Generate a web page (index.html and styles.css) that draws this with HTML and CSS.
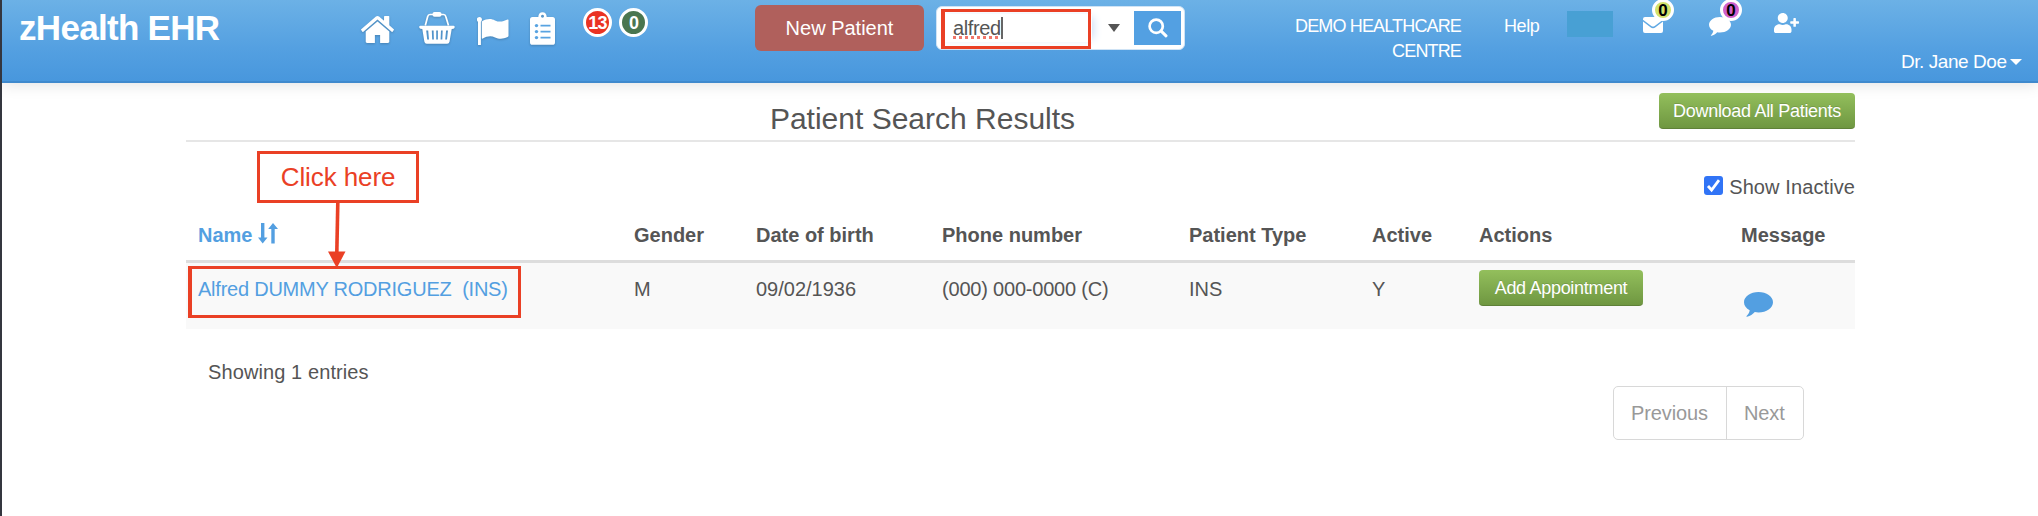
FILE: index.html
```
<!DOCTYPE html>
<html lang="en">
<head>
    <meta charset="UTF-8">
    <meta name="viewport" content="width=device-width, initial-scale=1.0">
    <title>zHealth EHR - Patient Search Results</title>
    <link rel="stylesheet" href="styles.css">
</head>
<body>

<svg width="0" height="0" class="sprite">
    <symbol id="comment" viewBox="0 0 29 25">
        <path d="M14.5 0C22.5 0 29 4.5 29 10.2S22.5 20.4 14.5 20.4c-1.3 0-2.5-.1-3.7-.3-2 2.200-4.600 3.900-7.700 4.700-.6.100-.9-.5-.5-.9 1.500-1.600 2.800-3 3.100-5.700C2.200 16.400 0 13.500 0 10.200 0 4.500 6.500 0 14.500 0z"/>
    </symbol>
</svg>

<header class="navbar">
    <a class="brand">zHealth EHR</a>
    <nav class="nav-icons">
        <svg class="icon-home" viewBox="89 253 1614 1283" preserveAspectRatio="none"><path d="M1472 992v480q0 26-19 45t-45 19h-384v-384h-256v384h-384q-26 0-45-19t-19-45v-480q0-1 .5-3t.5-3l575-474 575 474q1 2 1 6zm223-69l-62 74q-8 9-21 11h-3q-13 0-21-7l-692-577-692 577q-12 8-24 7-13-2-21-11l-62-74q-8-10-7-23.5t11-21.500l719-599q32-26 76-26t76 26l244 204v-195q0-14 9-23t23-9h192q14 0 23 9t9 23v408l219 182q10 8 11 21.500t-7 23.500z"/></svg>
        <svg class="icon-basket" viewBox="0 0 36 32">
            <path d="M6.300 13.500 8.700 4.500Q9.200 2.500 11 2.500h13.500q1.800 0 2.300 2l2.700 9" fill="none" stroke="#fff" stroke-width="1.700"/>
            <rect x="13.500" y="0" width="9" height="4.800" rx="2"/>
            <path fill-rule="evenodd" d="M1.500 13.700h33q1.200 0 1.200 1.400 0 1.300-1.200 1.600l-1.800.4-2.200 12.600q-.4 2.100-2.300 2.100H7.700q-1.900 0-2.300-2.100L3.300 17.100l-1.800-.4Q.2 16.400.2 15.100q0-1.400 1.300-1.400zM7.200 18.500l1 9h1.800l-.8-9zM12.800 18.500l.4 9h1.700l-.3-9zM17.200 18.500v9h1.700v-9zM22 18.500l-.4 9h1.700l.4-9zM27.100 18.500l-.9 9H28l1-9z"/>
        </svg>
        <svg class="icon-flag" viewBox="0 0 32 28">
            <circle cx="2.400" cy="2.500" r="2.500"/>
            <path d="M1 3h2.900v25H1zM4.800 4.500C10 1.200 14.500 1.500 18 3.400c4 2 8 1.400 12.500-.8q1-.5 1 .6v15.600q0 .8-.9 1.200c-5 2.400-9 1.900-12.500.4-4.300-1.800-8-1.200-12.300 1.200q-1 .5-1-.6z"/>
        </svg>
        <svg class="icon-list" viewBox="0 0 25 33">
            <path fill-rule="evenodd" d="M2.500 5H8.300Q8.500.3 12.500.3T16.700 5h5.800Q25 5 25 7.500v22.700q0 2.600-2.500 2.600h-20Q0 32.800 0 30.200V7.500Q0 5 2.500 5zM12.500 2.800a1.500 1.500 0 1 0 .01 0z"/>
            <g fill="#58a3e1"><path d="M10.500 12.700h10v1.800h-10zM10.500 18.700h10v1.800h-10zM10.500 24.700h10v1.800h-10z"/><circle cx="6.500" cy="13.600" r="1.700"/><circle cx="6.500" cy="19.600" r="1.700"/><circle cx="6.500" cy="25.600" r="1.700"/></g>
        </svg>
        <span class="count count-red">13</span>
        <span class="count count-green">0</span>
    </nav>
    <button class="btn-new">New Patient</button>
    <div class="search">
        <div class="search-input"><span class="typed">alfred</span></div>
        <span class="caret caret-dark"></span>
        <button class="search-btn">
            <svg width="20" height="20" viewBox="0 0 20 20"><circle cx="8.200" cy="8.200" r="6.600" fill="none" stroke="#fff" stroke-width="2.700"/><path d="m13.200 13.200 4.800 4.600" stroke="#fff" stroke-width="3" stroke-linecap="round"/></svg>
        </button>
    </div>
    <div class="clinic">DEMO HEALTHCARE CENTRE</div>
    <a class="help">Help</a>
    <span class="swatch"></span>
    <div class="alerts">
        <a class="alert alert-mail">
            <svg width="20" height="16" viewBox="0 0 20 16"><path d="M2 0h16q2 0 2 2v.8L11.700 9q-1.700 1.200-3.400 0L0 2.800V2Q0 0 2 0zM0 4.600l7.500 5.700q2.500 1.700 5 0L20 4.600V14q0 2-2 2H2q-2 0-2-2z"/></svg>
            <span class="dot dot-yellow">0</span>
        </a>
        <a class="alert alert-chat">
            <svg width="22" height="19" viewBox="0 0 29 25"><use href="#comment"/></svg>
            <span class="dot dot-pink">0</span>
        </a>
        <a class="alert alert-user">
            <svg width="25" height="20" viewBox="0 0 640 512"><path d="M624 208h-64v-64c0-8.800-7.200-16-16-16h-32c-8.800 0-16 7.200-16 16v64h-64c-8.800 0-16 7.200-16 16v32c0 8.800 7.200 16 16 16h64v64c0 8.800 7.200 16 16 16h32c8.800 0 16-7.200 16-16v-64h64c8.800 0 16-7.200 16-16v-32c0-8.800-7.200-16-16-16zm-400 48c70.700 0 128-57.300 128-128S294.700 0 224 0 96 57.300 96 128s57.300 128 128 128zm89.600 32h-16.700c-22.200 10.200-46.900 16-72.900 16s-50.600-5.800-72.900-16h-16.700C60.200 288 0 348.200 0 422.400V464c0 26.500 21.500 48 48 48h352c26.500 0 48-21.500 48-48v-41.600c0-74.200-60.200-134.400-134.400-134.400z"/></svg>
        </a>
    </div>
    <a class="user">Dr. Jane Doe<span class="caret"></span></a>
</header>

<main class="page">
    <div class="page-header">
        <h1>Patient Search Results</h1>
        <button class="btn-green btn-download">Download All Patients</button>
    </div>
    <label class="inactive">
        <svg width="19" height="19" viewBox="0 0 19 19"><rect width="19" height="19" rx="3" fill="#3174f6"/><path d="m4 10 3.600 4L15 4.200" fill="none" stroke="#fff" stroke-width="2.800"/></svg>
        <span>Show Inactive</span>
    </label>
    <table class="results">
        <colgroup>
            <col class="c-name"><col class="c-gender"><col class="c-dob"><col class="c-phone"><col class="c-type"><col class="c-active"><col class="c-actions"><col>
        </colgroup>
        <thead>
            <tr>
                <th class="sorted">Name <svg width="20" height="21" viewBox="0 0 20 21"><path d="M3 0h3.400v14.500H9.500L4.700 20.500 0 14.500h3zM13.300 20.500h3.400V6H20L15 0l-4.800 6h3.100z"/></svg></th>
                <th>Gender</th>
                <th>Date of birth</th>
                <th>Phone number</th>
                <th>Patient Type</th>
                <th>Active</th>
                <th>Actions</th>
                <th>Message</th>
            </tr>
        </thead>
        <tbody>
            <tr>
                <td><a class="patient">Alfred DUMMY RODRIGUEZ&nbsp; (INS)</a></td>
                <td>M</td>
                <td>09/02/1936</td>
                <td class="phone">(000) 000-0000 (C)</td>
                <td>INS</td>
                <td>Y</td>
                <td class="action"><button class="btn-green btn-add">Add Appointment</button></td>
                <td class="message"><svg width="29" height="25"><use href="#comment"/></svg></td>
            </tr>
        </tbody>
    </table>
    <p class="showing">Showing 1 entries</p>
    <div class="pagination">
        <a>Previous</a>
        <a>Next</a>
    </div>
</main>

<!-- annotations -->
<div class="mark mark-search"></div>
<div class="mark mark-click">Click here</div>
<div class="mark mark-name"></div>
<svg class="arrow" width="20" height="66" viewBox="0 0 20 66"><path d="M10.800 0 9.800 50" stroke="#ea4025" stroke-width="3.600"/><path d="M1 48.500h17.500L9.800 65z" fill="#ea4025"/></svg>

</body>
</html>
```
FILE: styles.css
```
* { box-sizing: border-box; }
body { margin: 0; height: 516px; overflow: hidden; border-left: 2px solid #34363f; background: #fff; color: #555; font-family: "Liberation Sans", Arial, sans-serif; font-size: 20px; line-height: 28px; }
button { border: 0; padding: 0; font-family: inherit; color: #fff; }
.sprite { position: absolute; }

/* top bar */
.navbar { display: flex; align-items: flex-start; height: 83px; color: #fff; background: linear-gradient(#6cb1e6, #54a0e1 60%, #4897dd); border-bottom: 2px solid #3f89cd; box-shadow: 0 1px 15px rgba(0, 0, 0, 0.13); }
.navbar svg { fill: #fff; }
.brand { width: 359px; padding: 8px 0 0 17px; font-size: 35px; line-height: 40px; font-weight: bold; letter-spacing: -0.7px; }
.nav-icons { display: flex; width: 391px; }
.nav-icons svg { flex: none; filter: drop-shadow(0 1px 1px rgba(0, 0, 0, 0.2)); }
.icon-home { width: 33px; height: 27px; margin-top: 16px; }
.icon-basket { width: 36px; height: 32px; margin: 12px 0 0 25px; }
.icon-flag { width: 32px; height: 28px; margin: 17px 0 0 22px; }
.icon-list { width: 25px; height: 33px; margin: 12px 0 0 21px; }
.count { flex: none; width: 29px; height: 29px; margin-top: 8px; border: 3px solid #fff; border-radius: 50%; font-size: 18px; line-height: 24px; font-weight: bold; text-align: center; letter-spacing: -0.8px; }
.count-red { background: #ea3323; margin-left: 28px; }
.count-green { background: #4a7650; margin-left: 7px; }
.btn-new { width: 169px; height: 46px; margin: 5px 12px 0 3px; border-radius: 6px; background: #b0605c; font-size: 20px; }
.search { display: flex; align-items: center; width: 249px; height: 44px; margin-top: 6px; padding-right: 2px; background: #fff; border: 1px solid #cfe3f5; border-radius: 6px; color: #555; }
.search-input { width: 155px; padding-left: 16px; box-shadow: 5px 0 8px -3px #cfe0f7; }
.typed { border-right: 2px solid #666; text-decoration: underline dotted #f0766a 3px; text-underline-offset: 1px; text-decoration-skip-ink: none; letter-spacing: -0.4px; }
.caret { display: inline-block; border: 6px solid transparent; border-top-color: #fff; border-bottom: 0; }
.caret-dark { margin: 0 14px 0 16px; border-width: 8px 6.5px 0; border-top-color: #555; }
.search-btn { display: flex; align-items: center; justify-content: center; width: 47px; height: 34px; background: #53a0e2; }
.clinic { width: 180px; margin: 14px 0 0 96px; text-align: right; font-size: 18px; line-height: 24.5px; letter-spacing: -0.85px; }
.help { margin: 14px 0 0 43px; width: 63px; font-size: 18px; line-height: 24.5px; letter-spacing: -0.4px; }
.swatch { width: 46px; height: 26px; margin-top: 11px; background: #48a0d4; }
.alerts { display: flex; width: 186px; padding-left: 30px; }
.alert { position: relative; width: 66px; padding-top: 17px; line-height: 0; }
.alert-chat { width: 65px; }
.alert-user { width: 25px; padding-top: 13px; }
.dot { position: absolute; left: 9px; top: -1px; width: 22px; height: 22px; border: 3px solid #fff; border-radius: 50%; color: #000; font-size: 17px; line-height: 17px; font-weight: bold; text-align: center; }
.dot-yellow { background: #d3e26b; }
.dot-pink { left: 11px; background: #cf60cb; }
.user { flex: none; margin: 48px 0 0 102px; font-size: 19px; white-space: nowrap; letter-spacing: -0.45px; }
.user .caret { margin: 0 0 3px 3px; }

/* results */
.page { width: 1669px; margin-left: 184px; }
.page-header { display: grid; grid-template-columns: 1fr 196px; height: 59px; border-bottom: 2px solid #e6e6e6; }
.page-header h1 { margin: 17px 0 0; font-size: 30px; line-height: 38px; font-weight: normal; text-align: center; }
.btn-green { height: 36px; padding-top: 1px; border-radius: 4px; background: linear-gradient(#93bf5c, #6f9741); border-bottom: 1px solid #5f8138; font-size: 18px; letter-spacing: -0.3px; text-shadow: 0 -1px 0 rgba(0, 0, 0, 0.12); }
.btn-download { margin-top: 10px; }
.inactive { display: flex; justify-content: flex-end; gap: 6px; height: 74px; padding-top: 34px; }
.inactive span { margin-top: -3px; letter-spacing: 0.1px; }
.results { width: 1669px; table-layout: fixed; border-collapse: separate; border-spacing: 0; text-align: left; }
.c-name { width: 436px; }
.c-gender { width: 122px; }
.c-dob { width: 186px; }
.c-phone { width: 247px; }
.c-type { width: 183px; }
.c-active { width: 107px; }
.c-actions { width: 262px; }
.results th { height: 47px; padding: 5px 0 0 12px; border-bottom: 3px solid #ddd; vertical-align: top; }
.results td { height: 66px; padding: 12px 0 0 12px; background: #f9f9f9; vertical-align: top; }
.results .sorted, .patient { color: #539fe1; }
.sorted svg, .message svg { fill: #539fe1; }
.sorted svg { vertical-align: -2px; }
.patient { letter-spacing: -0.23px; }
.results .phone { letter-spacing: -0.2px; }
.results .action { padding-top: 7px; }
.btn-add { display: block; width: 164px; }
.results .message { padding: 29px 0 0 15px; line-height: 0; }
.showing { margin: 29px 0 0 22px; letter-spacing: 0.1px; }
.pagination { display: flex; width: 191px; height: 54px; margin-left: 1427px; border: 1px solid #d8d8d8; border-radius: 5px; line-height: 52px; color: #999; }
.pagination a { padding-left: 17px; letter-spacing: -0.1px; }
.pagination a:first-child { width: 113px; border-right: 1px solid #d8d8d8; }

/* annotations */
.mark { position: absolute; border: 3px solid #ea4025; color: #ea4025; }
.mark-search { left: 941px; top: 9px; width: 150px; height: 40px; border-width: 3px 3px 3px 4px; }
.mark-click { left: 257px; top: 151px; width: 162px; height: 52px; font-size: 26px; line-height: 47px; text-align: center; letter-spacing: -0.1px; }
.mark-name { left: 188px; top: 266px; width: 333px; height: 52px; border-width: 3px 3px 3px 4px; }
.arrow { position: absolute; left: 327px; top: 203px; }
```
